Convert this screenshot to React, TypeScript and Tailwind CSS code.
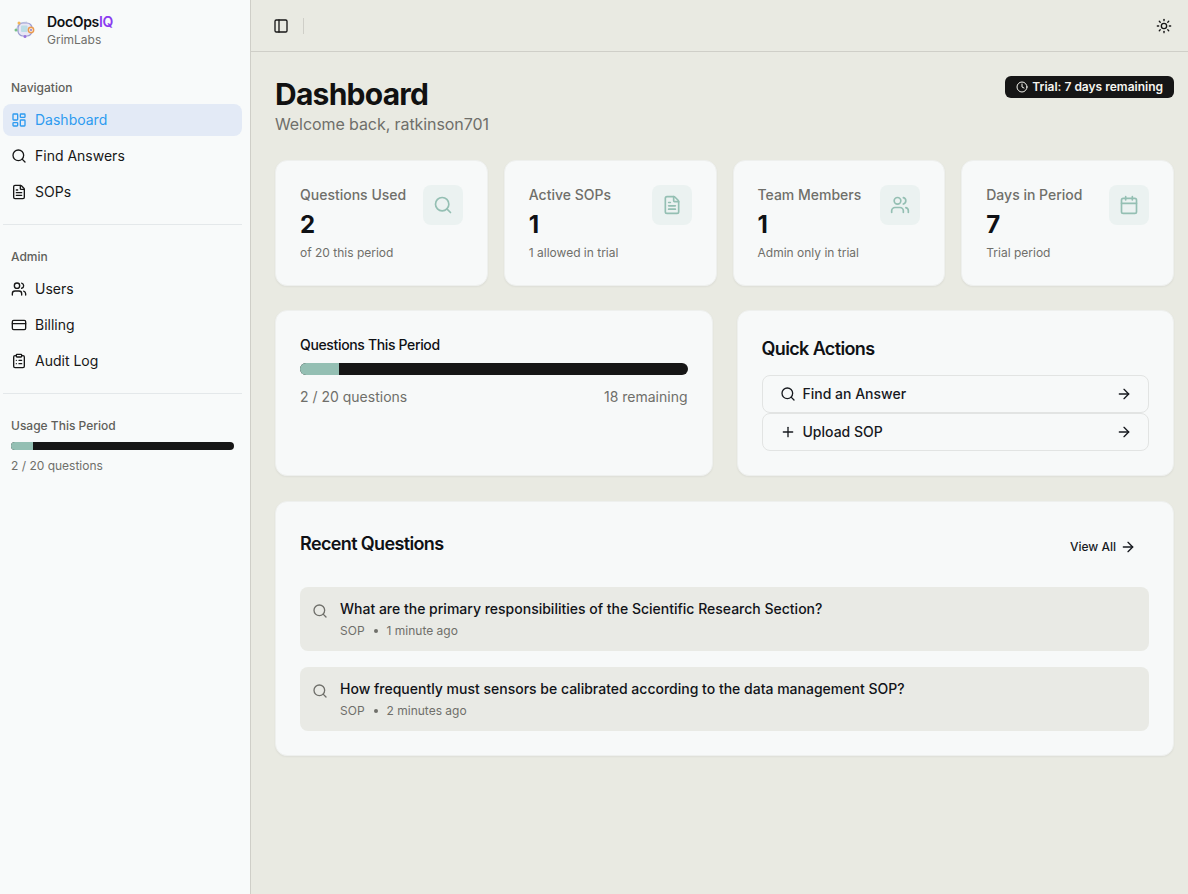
import {
  ArrowRight,
  Calendar,
  ClipboardList,
  Clock,
  CreditCard,
  FileText,
  LayoutDashboard,
  PanelLeft,
  Plus,
  Search,
  Sun,
  Users,
} from 'lucide-react';

function Logo() {
  return (
    <svg width="24" height="24" viewBox="0 0 24 24" fill="none">
      <path d="M6 6 L3 13 L12 19 M6 6 L14 5" stroke="#c3cfe2" strokeWidth="0.8" />
      <rect x="5" y="6" width="14" height="13" rx="5" fill="#e8e6f5" stroke="#9c9dd2" strokeWidth="1.2" />
      <rect x="8" y="8.5" width="6.5" height="6.5" rx="1" fill="#bcdde6" />
      <circle cx="6" cy="6" r="1.5" fill="#f5b656" />
      <circle cx="3" cy="13" r="1.5" fill="#78c088" />
      <circle cx="12" cy="19.5" r="1.5" fill="#9a72dc" />
      <circle cx="18" cy="13" r="2.7" fill="#f8e6d2" stroke="#ea9a50" strokeWidth="1.4" />
      <circle cx="18" cy="13" r="0.9" fill="#7f76d2" />
    </svg>
  );
}

function NavItem({ icon: Icon, label, active }: { icon: typeof Search; label: string; active?: boolean }) {
  return (
    <div
      className={`flex h-8 items-center gap-2 rounded-lg px-2 text-sm ${
        active ? 'bg-[#e3eaf6] text-[#2e9bf0]' : 'text-[#171717]'
      }`}
    >
      <Icon size={16} strokeWidth={2} />
      <span>{label}</span>
    </div>
  );
}

function StatCard({
  title,
  value,
  note,
  icon: Icon,
}: {
  title: string;
  value: string;
  note: string;
  icon: typeof Search;
}) {
  return (
    <div className="flex h-[126px] flex-1 items-start justify-between rounded-xl border border-[#eef0ee] bg-[#f7f9f9] p-6 shadow-xs">
      <div>
        <p className="text-sm leading-5 font-medium text-[#6f6f6a]">{title}</p>
        <p className="mt-[4px] text-2xl leading-8 font-bold text-[#0f1115]">{value}</p>
        <p className="mt-[4px] text-xs leading-4 text-[#6f6f6a]">{note}</p>
      </div>
      <div className="flex h-10 w-10 shrink-0 items-center justify-center rounded-lg bg-[#ebf2f1] text-[#94bfb3]">
        <Icon size={20} strokeWidth={2} />
      </div>
    </div>
  );
}

function ProgressBar({ height }: { height: string }) {
  return (
    <div className={`w-full overflow-hidden rounded-full bg-[#161616] ${height}`}>
      <div className="h-full bg-[#94bfb3]" style={{ width: `${(2 / 20) * 100}%` }} />
    </div>
  );
}

function ActionButton({ icon: Icon, label }: { icon: typeof Search; label: string }) {
  return (
    <div className="flex h-[38px] items-center rounded-lg border border-[#e2e4e3] bg-[#f7f9f9] pr-4 pl-[17px] text-sm font-medium text-[#171a1f]">
      <Icon size={16} strokeWidth={2} />
      <span className="ml-[7px]">{label}</span>
      <ArrowRight size={16} strokeWidth={2} className="ml-auto" />
    </div>
  );
}

function QuestionRow({ text, time }: { text: string; time: string }) {
  return (
    <div className="flex h-16 items-start gap-3 rounded-lg bg-[#e9eae5] px-3 pt-3">
      <Search size={16} strokeWidth={2} className="mt-[4px] shrink-0 text-[#6f6f6a]" />
      <div>
        <p className="text-sm leading-5 font-medium text-[#111318]">{text}</p>
        <p className="mt-1 flex items-center gap-2 text-xs leading-4 text-[#6f6f6a]">
          <span>SOP</span>
          <span className="mx-[1px] h-1 w-1 rounded-full bg-[#6f6f6a]" />
          <span>{time}</span>
        </p>
      </div>
    </div>
  );
}

export default function App() {
  return (
    <div className="flex h-[894px] overflow-hidden bg-[#e9eae2] font-['Inter',sans-serif]">
      <aside className="w-[251px] shrink-0 border-r border-[#cfcfc8] bg-[#f8fafa]">
        <div className="flex h-[55px] items-start gap-[10px] pt-[13px] pl-[13px]">
          <div className="mt-1">
            <Logo />
          </div>
          <div>
            <p className="text-sm leading-[18px] font-semibold tracking-tight text-[#0f1115]">
              DocOps<span className="text-[#8b3cf0]">IQ</span>
            </p>
            <p className="text-xs leading-[18px] text-[#6f6f6a]">GrimLabs</p>
          </div>
        </div>

        <div className="px-[3px]">
          <p className="mt-[25px] px-2 text-xs leading-4 font-medium text-[#5f5f5b]">Navigation</p>
          <div className="mt-2 flex flex-col gap-1 pr-[5px]">
            <NavItem icon={LayoutDashboard} label="Dashboard" active />
            <NavItem icon={Search} label="Find Answers" />
            <NavItem icon={FileText} label="SOPs" />
          </div>
          <div className="mt-4 mr-[5px] h-px bg-[#e4e8ea]" />

          <p className="mt-6 px-2 text-xs leading-4 font-medium text-[#5f5f5b]">Admin</p>
          <div className="mt-2 flex flex-col gap-1 pr-[5px]">
            <NavItem icon={Users} label="Users" />
            <NavItem icon={CreditCard} label="Billing" />
            <NavItem icon={ClipboardList} label="Audit Log" />
          </div>
          <div className="mt-4 mr-[5px] h-px bg-[#e4e8ea]" />

          <div className="px-2 pr-[13px]">
            <p className="mt-6 text-xs leading-4 font-medium text-[#5f5f5b]">Usage This Period</p>
            <div className="mt-2">
              <ProgressBar height="h-2" />
            </div>
            <p className="mt-2 text-xs leading-4 text-[#6f6f6a]">2 / 20 questions</p>
          </div>
        </div>
      </aside>

      <div className="min-w-0 flex-1">
        <header className="flex h-[52px] items-center border-b border-[#cfcfc8] pr-4 pl-[22px]">
          <PanelLeft size={16} strokeWidth={2} className="text-[#171717]" />
          <div className="ml-[14px] h-4 w-px bg-[#cfcfc8]" />
          <Sun size={16} strokeWidth={2} className="ml-auto text-[#171717]" />
        </header>

        <main className="pt-6 pr-[14px] pl-6">
          <div className="flex items-start justify-between">
            <div>
              <h1 className="text-3xl leading-9 font-bold tracking-tight text-[#111111]">Dashboard</h1>
              <p className="text-base leading-6 tracking-[-0.005em] text-[#6f6f6a]">Welcome back, ratkinson701</p>
            </div>
            <div className="flex h-[22px] items-center gap-1 rounded-md bg-[#161616] px-[11px] text-xs font-semibold text-[#f5f5f0]">
              <Clock size={12} strokeWidth={2} />
              <span>Trial: 7 days remaining</span>
            </div>
          </div>

          <div className="mt-6 flex gap-4">
            <StatCard title="Questions Used" value="2" note="of 20 this period" icon={Search} />
            <StatCard title="Active SOPs" value="1" note="1 allowed in trial" icon={FileText} />
            <StatCard title="Team Members" value="1" note="Admin only in trial" icon={Users} />
            <StatCard title="Days in Period" value="7" note="Trial period" icon={Calendar} />
          </div>

          <div className="mt-6 flex h-[166px] gap-6">
            <section className="flex-1 rounded-xl border border-[#eef0ee] bg-[#f7f9f9] p-6 shadow-xs">
              <h2 className="text-sm leading-5 font-medium tracking-tight text-[#0f1115]">Questions This Period</h2>
              <div className="mt-2">
                <ProgressBar height="h-3" />
              </div>
              <div className="mt-3 flex justify-between text-sm leading-5 text-[#6f6f6a]">
                <span>2 / 20 questions</span>
                <span>18 remaining</span>
              </div>
            </section>

            <section className="flex-1 rounded-xl border border-[#eef0ee] bg-[#f7f9f9] p-6 shadow-xs">
              <h2 className="text-lg leading-7 font-semibold tracking-[-0.035em] text-[#0f1115]">Quick Actions</h2>
              <div className="mt-[12px] flex flex-col">
                <ActionButton icon={Search} label="Find an Answer" />
                <ActionButton icon={Plus} label="Upload SOP" />
              </div>
            </section>
          </div>

          <section className="mt-[25px] h-[255px] rounded-xl border border-[#eef0ee] bg-[#f7f9f9] p-6 shadow-xs">
            <div className="flex h-[42px] items-start justify-between">
              <h2 className="mt-1 text-lg leading-7 font-semibold tracking-[-0.035em] text-[#0f1115]">Recent Questions</h2>
              <div className="mt-[13px] mr-[13px] flex items-center gap-1 text-xs font-medium text-[#171a1f]">
                <span>View All</span>
                <ArrowRight size={16} strokeWidth={2} />
              </div>
            </div>
            <div className="mt-[19px] flex flex-col gap-4">
              <QuestionRow text="What are the primary responsibilities of the Scientific Research Section?" time="1 minute ago" />
              <QuestionRow text="How frequently must sensors be calibrated according to the data management SOP?" time="2 minutes ago" />
            </div>
          </section>
        </main>
      </div>
    </div>
  );
}
